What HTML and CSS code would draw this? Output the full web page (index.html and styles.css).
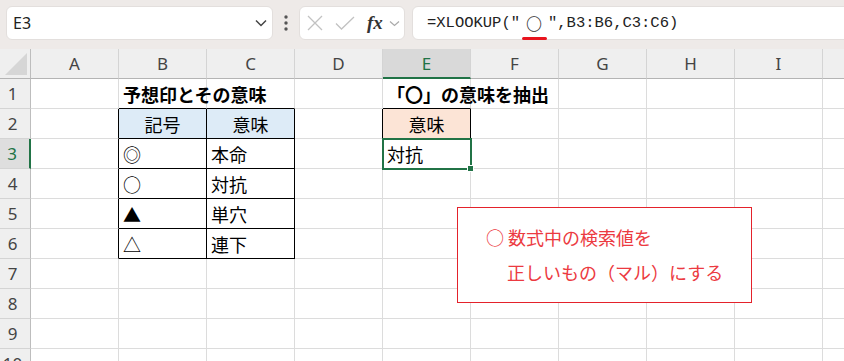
FILE: index.html
```html
<!DOCTYPE html>
<html lang="ja">
<head>
    <meta charset="UTF-8">
    <meta name="viewport" content="width=device-width, initial-scale=1.0">
    <link rel="stylesheet" href="styles.css">
    <title>XLOOKUP</title>
</head>
<body>
    <div class="toolbar">
        <div class="namebox">
            <span>E3</span>
            <svg class="chev" width="12" height="8" viewBox="0 0 12 8"><path d="M1 1.5 L6 6.5 L11 1.5" fill="none" stroke="#444" stroke-width="1.5"/></svg>
        </div>
        <div class="grip">
            <svg width="4" height="16" viewBox="0 0 4 16"><circle cx="2" cy="2" r="1.7" fill="#555"/><circle cx="2" cy="8" r="1.7" fill="#555"/><circle cx="2" cy="14" r="1.7" fill="#555"/></svg>
        </div>
        <div class="fxbox">
            <svg class="ic-x" width="16" height="16" viewBox="0 0 16 16"><path d="M1 1 L15 15 M15 1 L1 15" stroke="#c2c2c2" stroke-width="1.3" fill="none"/></svg>
            <svg class="ic-ok" width="20" height="14" viewBox="0 0 20 14"><path d="M1 7.5 L6.5 13 L19 1" stroke="#c2c2c2" stroke-width="1.3" fill="none"/></svg>
            <span class="fx">fx</span>
            <svg class="ic-dd" width="11" height="7" viewBox="0 0 11 7"><path d="M1 1.5 L5.5 5.5 L10 1.5" stroke="#aaa" stroke-width="1.2" fill="none"/></svg>
        </div>
        <div class="formula">=XLOOKUP("<span class="maru">〇</span>",B3:B6,C3:C6)</div>
    </div>

    <div class="sheet">
        <div class="corner"><svg width="22" height="22" viewBox="0 0 22 22"><path d="M22 0 L22 22 L0 22 Z" fill="#d6d6d6"/></svg></div>
        <div class="ch">A</div><div class="ch">B</div><div class="ch">C</div><div class="ch">D</div><div class="ch on">E</div>
        <div class="ch">F</div><div class="ch">G</div><div class="ch">H</div><div class="ch">I</div><div class="ch">J</div>

        <div class="rh">1</div>
        <div class="c"></div><div class="c bb title">予想印とその意味</div><div class="c bb"></div><div class="c"></div>
        <div class="c bb title">「〇」の意味を抽出</div><div class="c"></div><div class="c"></div><div class="c"></div><div class="c"></div><div class="c"></div>

        <div class="rh">2</div>
        <div class="c br"></div><div class="c th bb br">記号</div><div class="c th bb br">意味</div><div class="c br"></div>
        <div class="c th2 bb br">意味</div><div class="c"></div><div class="c"></div><div class="c"></div><div class="c"></div><div class="c"></div>

        <div class="rh on">3</div>
        <div class="c br"></div><div class="c bb br">◎</div><div class="c bb br">本命</div><div class="c"></div>
        <div class="c sel">対抗</div><div class="c"></div><div class="c"></div><div class="c"></div><div class="c"></div><div class="c"></div>

        <div class="rh">4</div>
        <div class="c br"></div><div class="c bb br">○</div><div class="c bb br">対抗</div><div class="c"></div>
        <div class="c"></div><div class="c"></div><div class="c"></div><div class="c"></div><div class="c"></div><div class="c"></div>

        <div class="rh">5</div>
        <div class="c br"></div><div class="c bb br">▲</div><div class="c bb br">単穴</div><div class="c"></div>
        <div class="c"></div><div class="c"></div><div class="c"></div><div class="c"></div><div class="c"></div><div class="c"></div>

        <div class="rh">6</div>
        <div class="c br"></div><div class="c bb br">△</div><div class="c bb br">連下</div><div class="c"></div>
        <div class="c"></div><div class="c"></div><div class="c"></div><div class="c"></div><div class="c"></div><div class="c"></div>

        <div class="rh">7</div>
        <div class="c"></div><div class="c"></div><div class="c"></div><div class="c"></div><div class="c"></div>
        <div class="c"></div><div class="c"></div><div class="c"></div><div class="c"></div><div class="c"></div>

        <div class="rh">8</div>
        <div class="c"></div><div class="c"></div><div class="c"></div><div class="c"></div><div class="c"></div>
        <div class="c"></div><div class="c"></div><div class="c"></div><div class="c"></div><div class="c"></div>

        <div class="rh">9</div>
        <div class="c"></div><div class="c"></div><div class="c"></div><div class="c"></div><div class="c"></div>
        <div class="c"></div><div class="c"></div><div class="c"></div><div class="c"></div><div class="c"></div>

        <div class="rh">10</div>
        <div class="c"></div><div class="c"></div><div class="c"></div><div class="c"></div><div class="c"></div>
        <div class="c"></div><div class="c"></div><div class="c"></div><div class="c"></div><div class="c"></div>
    </div>

    <div class="note">
        <div>○ 数式中の検索値を</div>
        <div class="indent">正しいもの（マル）にする</div>
    </div>
</body>
</html>
```

FILE: styles.css
```css
body {
    margin: 0;
    width: 844px;
    height: 361px;
    overflow: hidden;
    position: relative;
    background: #fff;
    font-family: "Noto Sans", "Noto Sans CJK JP", sans-serif;
}

/* formula bar */
.toolbar {
    display: flex;
    align-items: flex-start;
    height: 49px;
    padding: 6px 0 0 6px;
    box-sizing: border-box;
    background: #eeeae8;
}

.namebox,
.fxbox,
.formula {
    height: 34px;
    box-sizing: border-box;
    background: #fff;
    border: 1px solid #e3dfdd;
    border-radius: 6px;
    display: flex;
    align-items: center;
}

.namebox {
    width: 267px;
    padding: 0 5px 0 6px;
    justify-content: space-between;
    font-size: 16px;
    color: #222;
}

.grip {
    width: 26px;
    height: 34px;
    display: flex;
    align-items: center;
    justify-content: center;
}

.fxbox {
    width: 106px;
    padding-left: 7px;
}

.ic-ok {
    margin-left: 12px;
}

.fx {
    margin-left: 12px;
    font-family: "Liberation Serif", serif;
    font-style: italic;
    font-weight: bold;
    font-size: 19px;
    color: #333;
}

.ic-dd {
    margin-left: 6px;
}

.formula {
    flex: 1;
    margin-left: 7px;
    margin-right: -10px;
    padding-left: 14px;
    font-family: "Liberation Mono", "Noto Sans CJK JP", monospace;
    font-size: 15.5px;
    color: #222;
    white-space: pre;
}

.maru {
    display: inline-block;
    width: 28px;
    text-align: center;
    position: relative;
    font-family: "Noto Sans CJK JP", sans-serif;
    font-size: 16px;
    font-weight: 300;
    color: #333;
}

.maru::after {
    content: "";
    position: absolute;
    left: 2px;
    right: 1px;
    bottom: -5px;
    height: 3px;
    border-radius: 2px;
    background: #e8141e;
}

/* grid */
.sheet {
    display: grid;
    grid-template-columns: 31px repeat(10, 88px);
    grid-auto-rows: 30px;
    height: 312px;
    overflow: hidden;
}

.sheet > div {
    box-sizing: border-box;
    border-right: 1px solid #dcdcdc;
    border-bottom: 1px solid #dcdcdc;
}

.sheet > .corner {
    background: #efefef;
    border-right: 1px solid #bdbdbd;
    border-bottom: 1px solid #b4b4b4;
    display: flex;
    align-items: flex-end;
    justify-content: flex-end;
    padding: 0 3px 3px 0;
}

.sheet > .ch {
    background: #efefef;
    border-right: 1px solid #d4d4d4;
    border-bottom: 1px solid #b4b4b4;
    display: flex;
    align-items: center;
    justify-content: center;
    font-size: 17px;
    color: #444;
}

.sheet > .ch.on {
    background: #d9d9d9;
    color: #217346;
    border-bottom: 2px solid #217346;
}

.sheet > .rh {
    background: #efefef;
    border-right: 1px solid #bdbdbd;
    border-bottom: 1px solid #d4d4d4;
    display: flex;
    align-items: center;
    justify-content: center;
    padding-right: 5px;
    font-size: 17px;
    color: #444;
}

.sheet > .rh.on {
    background: #dedede;
    color: #217346;
    border-right: 2px solid #217346;
}

.c {
    display: flex;
    align-items: center;
    padding: 0 4px;
    white-space: nowrap;
    font-family: "Noto Sans CJK JP", sans-serif;
    font-size: 18px;
    color: #000;
}

.sheet > .bb {
    border-bottom-color: #000;
}

.sheet > .br {
    border-right-color: #000;
}

.title {
    font-weight: bold;
}

.th {
    justify-content: center;
    background: #ddebf7;
}

.th2 {
    justify-content: center;
    background: #fce4d6;
}

.sel {
    position: relative;
    outline: 2px solid #217346;
    outline-offset: -1px;
}

.sel::after {
    content: "";
    position: absolute;
    right: -4px;
    bottom: -4px;
    width: 5px;
    height: 5px;
    background: #217346;
    border: 1px solid #fff;
}

/* callout */
.note {
    position: absolute;
    left: 457px;
    top: 207px;
    width: 295px;
    height: 96px;
    box-sizing: border-box;
    border: 1px solid #e4222b;
    background: #fff;
    padding: 12px 0 0 28px;
    font-family: "Noto Sans CJK JP", sans-serif;
    font-size: 18px;
    line-height: 35px;
    color: #ec3a41;
}

.note .indent {
    margin-left: 21px;
}
```
